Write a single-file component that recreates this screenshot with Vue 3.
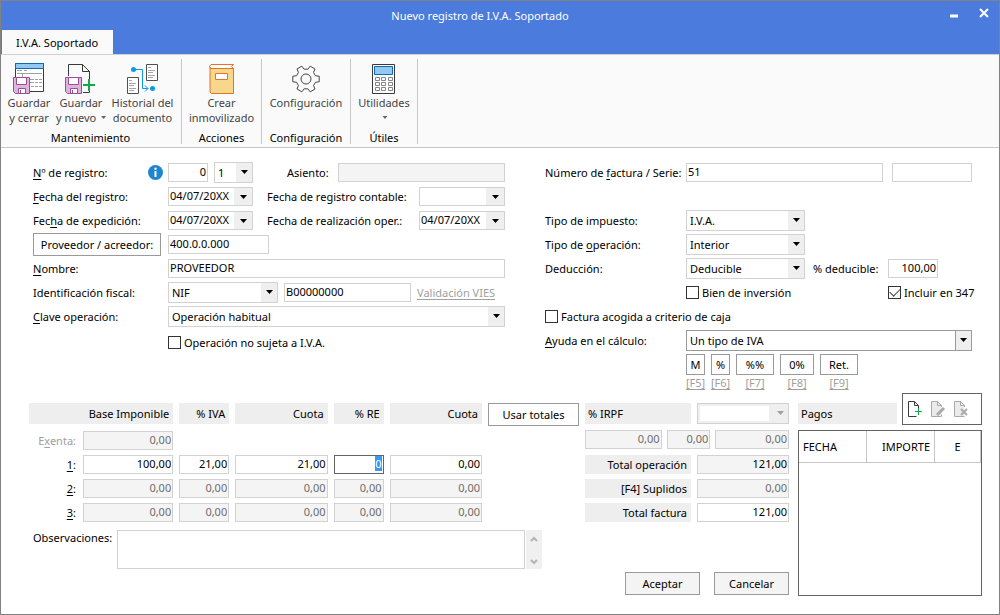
<script setup>
import { onMounted, ref } from 'vue'

const equivalenceInput = ref(null)

const bases = [
  { key: 'Exenta', off: true, cells: ['0,00'] },
  { key: '1', off: false, cells: ['100,00', '21,00', '21,00', '0', '0,00'] },
  { key: '2', off: true, cells: ['0,00', '0,00', '0,00', '0,00', '0,00'] },
  { key: '3', off: true, cells: ['0,00', '0,00', '0,00', '0,00', '0,00'] }
]
const columnNames = ['Base imponible', '% IVA', 'Cuota IVA', '% RE', 'Cuota RE']

const rates = [
  { label: 'M', key: '[F5]', size: 'small' },
  { label: '%', key: '[F6]', size: 'small' },
  { label: '%%', key: '[F7]', size: 'large' },
  { label: '0%', key: '[F8]', size: 'medium' },
  { label: 'Ret.', key: '[F9]', size: 'large' }
]

const totals = [
  { id: 'total-op', label: 'Total operación', value: '121,00', kind: 'locked' },
  { id: 'suplidos', label: '[F4] Suplidos', value: '0,00', kind: 'off' },
  { id: 'total-fac', label: 'Total factura', value: '121,00', kind: '' }
]

function gear(cx, cy, outer, inner) {
  const points = []
  for (let i = 0; i < 6; i++) {
    for (const [offset, r] of [[-19, inner], [-12, outer], [12, outer], [19, inner]]) {
      const a = ((i * 60 + offset) * Math.PI) / 180
      points.push(`${(cx + r * Math.cos(a)).toFixed(2)} ${(cy + r * Math.sin(a)).toFixed(2)}`)
    }
  }
  return `M${points.join('L')}Z`
}
const gearPath = gear(16, 17, 13.5, 10)

const setEquivalence = (el, row, col) => {
  if (row === 1 && col === 3) equivalenceInput.value = el
}

onMounted(() => {
  equivalenceInput.value?.focus()
  equivalenceInput.value?.select()
})
</script>

<template>
  <main class="window">
    <header class="titlebar">
      <h1>Nuevo registro de I.V.A. Soportado</h1>
      <div class="window-buttons">
        <button type="button" aria-label="Minimizar">
          <svg width="10" height="12" viewBox="0 0 10 12"><path d="M1 9h8" stroke="#fff" stroke-width="3" /></svg>
        </button>
        <button type="button" aria-label="Cerrar">
          <svg width="10" height="12" viewBox="0 0 10 12"><path d="M1 2l8 8M9 2l-8 8" stroke="#fff" stroke-width="2" /></svg>
        </button>
      </div>
      <button class="tab" type="button">I.V.A. Soportado</button>
    </header>

    <nav class="ribbon">
      <section class="group maintenance">
        <div class="tools">
          <button class="tool" type="button">
            <svg width="32" height="32" viewBox="0 0 32 32" fill="none">
              <path d="M2.5 1.5h28v28h-28z" fill="#fff" stroke="#3a3a3a" />
              <path d="M2.5 1.5h28v5h-28z" fill="#91c9f0" stroke="#0f6ab4" />
              <path d="M4 8.5h5M11 8.5h3M4 11.5h25M9.5 11v5M17 17.5h4M22 17.5h3M26 17.5h3M17 20.5h4M22 20.5h3M26 20.5h3M18 24.5h3M22 24.5h3M26 24.5h3" stroke="#a0a0a0" />
              <path d="M.5 15.5h16v16h-14l-2-2z" fill="#dcb5dd" stroke="#9b4c9b" />
              <path d="M3.5 15.5h10v7h-10zM5.5 26.5h7v5h-7z" fill="#fff" stroke="#9b4c9b" />
              <path d="M7.5 28v3" stroke="#9b4c9b" />
            </svg>
            <span>Guardar<br />y cerrar</span>
          </button>
          <button class="tool" type="button">
            <svg width="32" height="32" viewBox="0 0 32 32" fill="none">
              <path d="M3.5 14V2.5h14l7 7V18M24.5 29v1.5H18" stroke="#3a3a3a" />
              <path d="M17.5 2.5v7h7" stroke="#3a3a3a" />
              <path d="M.5 15.5h16v16h-14l-2-2z" fill="#dcb5dd" stroke="#9b4c9b" />
              <path d="M3.5 15.5h10v7h-10zM5.5 26.5h7v5h-7z" fill="#fff" stroke="#9b4c9b" />
              <path d="M7.5 28v3" stroke="#9b4c9b" />
              <path d="M18 23h12M24 17v12" stroke="#12a84c" stroke-width="2" />
            </svg>
            <span>Guardar<br />y nuevo <i class="caret"></i></span>
          </button>
          <button class="tool wide" type="button">
            <svg width="34" height="32" viewBox="0 0 34 32" fill="none">
              <path d="M20.5 2.5h11v16h-11zM1.5 15.5h11v16h-11z" fill="#fff" stroke="#505050" />
              <path d="M22 5.5h3M22 8.5h7M22 10.5h5M22 13.5h7M22 15.5h5M3 18.5h3M3 21.5h7M3 23.5h5M3 26.5h7M3 28.5h5" stroke="#a5a5a5" />
              <path d="M7 7.5h9.500v19H22M19 23.5l3 3-3 3" stroke="#0a9be8" />
              <circle cx="7.5" cy="7.5" r="2.500" fill="#0a9be8" />
              <circle cx="26.5" cy="26.5" r="2.500" fill="#0a9be8" />
            </svg>
            <span>Historial del<br />documento</span>
          </button>
        </div>
        <h2>Mantenimiento</h2>
      </section>
      <section class="group actions">
        <div class="tools">
          <button class="tool wide" type="button">
            <svg width="32" height="32" viewBox="0 0 32 32" fill="none">
              <path d="M4.5 6.5h23v25h-22l-1.500-1.500V4z" fill="#f7d78c" stroke="#e8712a" />
              <path d="M27.5 2.5H5L3.5 4.5 5 6.5h22.500l-2-2z" fill="#fff" stroke="#e8712a" />
              <path d="M9.5 11.5h12v6h-12z" fill="#fff" stroke="#e8712a" />
            </svg>
            <span>Crear<br />inmovilizado</span>
          </button>
        </div>
        <h2>Acciones</h2>
      </section>
      <section class="group setup">
        <div class="tools">
          <button class="tool wide" type="button">
            <svg width="32" height="32" viewBox="0 0 32 32" fill="none" stroke="#444">
              <path :d="gearPath" stroke-linejoin="round" />
              <circle cx="16" cy="17" r="5" />
            </svg>
            <span>Configuración</span>
          </button>
        </div>
        <h2>Configuración</h2>
      </section>
      <section class="group extras">
        <div class="tools">
          <button class="tool" type="button">
            <svg width="32" height="32" viewBox="0 0 32 32" fill="none">
              <path d="M4.5 2.5h22v29h-22z" fill="#fff" stroke="#3a3a3a" />
              <path d="M6.5 4.5h18v8h-18z" fill="#91c9f0" stroke="#0f6ab4" />
              <path d="M7.5 15.5h4v3h-4zM13.5 15.5h4v3h-4zM20.5 15.5h4v3h-4zM7.5 20.5h4v3h-4zM13.5 20.5h4v3h-4zM20.5 20.5h4v3h-4zM7.5 25.5h4v3h-4zM13.5 25.5h4v3h-4zM20.5 25.5h4v3h-4z" stroke="#858585" />
            </svg>
            <span>Utilidades<br /><i class="caret"></i></span>
          </button>
        </div>
        <h2>Útiles</h2>
      </section>
    </nav>

    <form class="body" @submit.prevent>
      <div class="fields">
        <div class="panel">
          <div class="row">
            <label class="name" for="reg"><u>N</u>º de registro:</label>
            <svg class="info" width="15" height="15" viewBox="0 0 15 15">
              <circle cx="7.5" cy="7.5" r="7.500" fill="#1e86cf" />
              <path d="M7.5 6v6" stroke="#fff" stroke-width="2" fill="none" />
              <circle cx="7.5" cy="3.800" r="1.200" fill="#fff" />
            </svg>
            <div class="slot">
              <input id="reg" class="number w40" value="0" />
              <div class="combo w39"><select aria-label="Serie de registro"><option>1</option></select></div>
              <label class="asiento" for="asiento">Asiento:</label>
              <input id="asiento" class="grow" disabled />
            </div>
          </div>
          <div class="row">
            <label class="name" for="f-reg"><u>F</u>echa del registro:</label>
            <div class="slot">
              <div class="combo date"><input id="f-reg" value="04/07/20XX" /></div>
              <label class="second" for="f-cont">Fecha de registro contable:</label>
              <div class="combo date to-edge"><input id="f-cont" /></div>
            </div>
          </div>
          <div class="row">
            <label class="name" for="f-exp">Fec<u>h</u>a de expedición:</label>
            <div class="slot">
              <div class="combo date"><input id="f-exp" value="04/07/20XX" /></div>
              <label class="second" for="f-oper">Fecha de realización oper.:</label>
              <div class="combo date to-edge"><input id="f-oper" value="04/07/20XX" /></div>
            </div>
          </div>
          <div class="row">
            <div class="name"><button class="btn provider" type="button">Proveedor / acreedor:</button></div>
            <div class="slot"><input class="w101" aria-label="Cuenta de proveedor" value="400.0.0.000" /></div>
          </div>
          <div class="row">
            <label class="name" for="nombre"><u>N</u>ombre:</label>
            <div class="slot"><input id="nombre" class="grow" value="PROVEEDOR" /></div>
          </div>
          <div class="row">
            <label class="name" for="fiscal">Identificación fiscal:</label>
            <div class="slot">
              <div class="combo w110"><select id="fiscal"><option>NIF</option></select></div>
              <input class="w127" aria-label="Número fiscal" value="B00000000" />
              <a class="link vies" href="#">Validación VIES</a>
            </div>
          </div>
          <div class="row">
            <label class="name" for="clave"><u>C</u>lave operación:</label>
            <div class="slot">
              <div class="combo grow"><select id="clave"><option>Operación habitual</option></select></div>
            </div>
          </div>
          <div class="row last">
            <span class="name"></span>
            <label class="check"><input type="checkbox" />Operación no sujeta a I.V.A.</label>
          </div>
        </div>

        <div class="panel right">
          <div class="row">
            <label class="name" for="factura">Número de <u>f</u>actura / Serie:</label>
            <div class="slot">
              <input id="factura" class="grow" value="51" />
              <input class="serie" aria-label="Serie" />
            </div>
          </div>
          <div class="row"></div>
          <div class="row">
            <label class="name" for="impuesto">Tipo de impuesto:</label>
            <div class="slot"><div class="combo w119"><select id="impuesto"><option>I.V.A.</option></select></div></div>
          </div>
          <div class="row">
            <label class="name" for="tipo-op">Tipo de <u>o</u>peración:</label>
            <div class="slot"><div class="combo w119"><select id="tipo-op"><option>Interior</option></select></div></div>
          </div>
          <div class="row">
            <label class="name" for="deduccion">Deducción:</label>
            <div class="slot">
              <div class="combo w119"><select id="deduccion"><option>Deducible</option></select></div>
              <label class="percent" for="deducible">% deducible:</label>
              <input id="deducible" class="number w50" value="100,00" />
            </div>
          </div>
          <div class="row">
            <span class="name"></span>
            <div class="slot">
              <label class="check inversion"><input type="checkbox" />Bien de inversión</label>
              <label class="check"><input type="checkbox" checked />Incluir en 347</label>
            </div>
          </div>
          <div class="row">
            <label class="check"><input type="checkbox" />Factura acogida a criterio de caja</label>
          </div>
          <div class="row">
            <label class="name" for="ayuda"><u>A</u>yuda en el cálculo:</label>
            <div class="slot"><div class="combo strong grow"><select id="ayuda"><option>Un tipo de IVA</option></select></div></div>
          </div>
          <div class="row rates">
            <span class="name"></span>
            <div class="slot">
              <div v-for="rate in rates" :key="rate.key" class="rate" :class="rate.size">
                <button class="btn" type="button">{{ rate.label }}</button>
                <a class="link" href="#">{{ rate.key }}</a>
              </div>
            </div>
          </div>
        </div>
      </div>

      <div class="lower">
        <div class="breakdown">
          <div class="bases">
            <table>
              <colgroup>
                <col class="c-key" /><col class="c-wide" /><col class="c-rate" /><col class="c-wide" /><col class="c-rate" /><col class="c-wide" />
              </colgroup>
              <thead>
                <tr>
                  <th colspan="2"><span class="cap">Base Imponible</span></th>
                  <th><span class="cap">% IVA</span></th>
                  <th><span class="cap">Cuota</span></th>
                  <th><span class="cap">% RE</span></th>
                  <th><span class="cap">Cuota</span></th>
                </tr>
              </thead>
              <tbody>
                <tr v-for="(row, r) in bases" :key="row.key">
                  <th v-if="r === 0" class="key faded">E<u>x</u>enta:</th>
                  <th v-else class="key"><u>{{ row.key }}</u>:</th>
                  <td v-for="(cell, c) in row.cells" :key="c">
                    <input
                      :ref="(el) => setEquivalence(el, r, c)"
                      class="number"
                      :value="cell"
                      :disabled="row.off"
                      :aria-label="`${columnNames[c]} ${row.key}`"
                    />
                  </td>
                </tr>
              </tbody>
            </table>
            <button class="btn use-totals" type="button">Usar totales</button>
          </div>
          <div class="notes">
            <label for="notas">Observaciones:</label>
            <textarea id="notas"></textarea>
            <div class="scroller">
              <svg width="8" height="6" viewBox="0 0 8 6"><path d="M1 5l3-3 3 3" fill="none" stroke="#b4b4b4" stroke-width="2" /></svg>
              <svg width="8" height="6" viewBox="0 0 8 6"><path d="M1 1l3 3 3-3" fill="none" stroke="#b4b4b4" stroke-width="2" /></svg>
            </div>
          </div>
        </div>

        <div class="summary">
          <div class="pair">
            <span class="cap start">% IRPF</span>
            <div class="combo off"><select aria-label="Tipo de IRPF" disabled><option></option></select></div>
          </div>
          <div class="triple">
            <input class="number" aria-label="Base IRPF" value="0,00" disabled />
            <input class="number" aria-label="Porcentaje IRPF" value="0,00" disabled />
            <input class="number" aria-label="Cuota IRPF" value="0,00" disabled />
          </div>
          <div v-for="t in totals" :key="t.id" class="pair">
            <label class="cap low" :for="t.id">{{ t.label }}</label>
            <input :id="t.id" class="number" :class="t.kind" :value="t.value" :disabled="t.kind === 'off'" :readonly="t.kind === 'locked'" />
          </div>
          <div class="confirm">
            <button class="btn solid" type="submit">Aceptar</button>
            <button class="btn solid" type="button">Cancelar</button>
          </div>
        </div>

        <div class="payments">
          <div class="payments-head">
            <h2 class="cap start">Pagos</h2>
            <div class="toolbox">
              <button type="button" aria-label="Añadir pago">
                <svg width="16" height="18" viewBox="0 0 16 18" fill="none">
                  <path d="M11.5 8V5.5l-4-4h-6v15h8M7.5 1.5v4h4" stroke="#3a3a3a" />
                  <path d="M8 11.500h7M11.5 8v7" stroke="#12a84c" />
                </svg>
              </button>
              <button type="button" aria-label="Editar pago" disabled>
                <svg width="16" height="18" viewBox="0 0 16 18" fill="none">
                  <path d="M11.5 7V5.5l-4-4h-6v15h10v-2" fill="#ebebeb" stroke="#aaa" />
                  <path d="M7.5 1.5v4h4" stroke="#aaa" />
                  <path d="M7 15l7-7" stroke="#aaa" stroke-width="3" />
                </svg>
              </button>
              <button type="button" aria-label="Eliminar pago" disabled>
                <svg width="16" height="18" viewBox="0 0 16 18" fill="none">
                  <path d="M11.5 7V5.5l-4-4h-6v15h10" fill="#ebebeb" stroke="#aaa" />
                  <path d="M7.5 1.5v4h4" stroke="#aaa" />
                  <path d="M8 9l6 6M14 9l-6 6" stroke="#aaa" stroke-width="2" />
                </svg>
              </button>
            </div>
          </div>
          <div class="list">
            <table>
              <thead>
                <tr><th class="date-col">FECHA</th><th class="amount-col">IMPORTE</th><th class="state-col">E</th></tr>
              </thead>
            </table>
          </div>
        </div>
      </div>
    </form>
  </main>
</template>

<style>
body {
  margin: 0;
}
</style>

<style scoped>
* {
  box-sizing: border-box;
}
.window {
  display: flex;
  flex-direction: column;
  min-height: 100vh;
  border: 1px solid #828282;
  background: #fff;
  color: #000;
  font: 11px/15px "Noto Sans", "Open Sans", sans-serif;
}
button,
input,
select,
textarea {
  font: inherit;
  color: inherit;
  margin: 0;
}
button {
  padding: 0;
  border: 0;
  background: none;
}
h1,
h2 {
  margin: 0;
  font: inherit;
}
u {
  text-underline-offset: 2px;
}

.titlebar {
  display: grid;
  grid-template-columns: 1fr auto 1fr;
  grid-template-rows: 29px 24px;
  background: #4b7bdc;
  color: #fff;
}
.titlebar h1 {
  grid-column: 2;
  align-self: center;
  padding-right: 40px;
}
.window-buttons {
  display: flex;
  justify-content: flex-end;
  align-items: flex-start;
  gap: 20px;
  padding: 6px 10px 0 0;
}
.window-buttons svg {
  display: block;
}
.tab {
  grid-column: 1;
  grid-row: 2;
  justify-self: start;
  margin-left: 1px;
  padding: 0 15px 0 14px;
  background: #fafafa;
  color: #000;
}
.ribbon {
  display: flex;
  padding: 4px 0 3px;
  border-top: 1px solid #d0d0d0;
  border-bottom: 1px solid #c6c6c6;
  background: #fafafa;
}
.group {
  display: flex;
  flex-direction: column;
  border-right: 1px solid #c6c6c6;
}
.group h2 {
  line-height: 12px;
  text-align: center;
}
.maintenance {
  padding: 0 3px 0 2px;
}
.actions {
  width: 80px;
}
.setup {
  width: 89px;
}
.extras {
  width: 67px;
}
.tools {
  display: flex;
  justify-content: center;
  height: 73px;
}
.tool {
  display: flex;
  flex-direction: column;
  align-items: center;
  gap: 1px;
  width: 52px;
  padding-top: 3px;
  color: #444;
  white-space: nowrap;
}
.tool.wide {
  width: 71px;
}
.tool svg {
  flex: none;
}
.caret {
  display: inline-block;
  width: 5px;
  height: 3px;
  margin: 0 0 3px 2px;
  background: #666;
  clip-path: polygon(0 0, 100% 0, 50% 100%);
}

.body {
  display: flex;
  flex: 1;
  flex-direction: column;
  padding: 13px 17px 18px 22px;
}
.fields {
  display: grid;
  grid-template-columns: minmax(0, 472fr) minmax(0, 427fr);
  gap: 40px;
  padding: 0 10px;
}
.panel {
  display: flex;
  flex-direction: column;
  gap: 1px;
}
.row {
  display: flex;
  align-items: center;
  position: relative;
  height: 23px;
}
.row.last {
  height: 27px;
}
.name {
  flex: none;
  width: 135px;
}
.right .name {
  width: 141px;
}
.slot {
  display: flex;
  flex: 1;
  align-items: center;
  gap: 6px;
  min-width: 0;
}
.info {
  position: absolute;
  left: 115px;
}
input:not([type="checkbox"]),
textarea {
  min-width: 0;
  height: 19px;
  padding: 0 2px 2px 1px;
  border: 1px solid #d2d2d2;
  border-radius: 0;
  outline: 0;
  background: #fff;
}
input.number {
  padding-right: 1px;
  text-align: right;
}
input:disabled:not([type="checkbox"]) {
  background: #f4f4f4;
  color: #6d6d6d;
}
input.locked:not([type="checkbox"]) {
  background: #f4f4f4;
}
td input:focus:not([type="checkbox"]) {
  border-color: #646464;
}
input::selection {
  background: #3399ff;
  color: #fff;
}
.combo {
  position: relative;
  display: flex;
  flex: none;
  height: 21px;
}
.combo select {
  width: 100%;
  height: 100%;
  padding: 0 16px 0 3px;
  border: 1px solid #d2d2d2;
  border-radius: 0;
  outline: 0;
  appearance: none;
  background: linear-gradient(#efefef, #efefef) right / 16px 100% no-repeat #fff;
}
.combo::after {
  content: "";
  position: absolute;
  top: 8px;
  right: 5px;
  width: 7px;
  height: 4px;
  background: #000;
  clip-path: polygon(0 0, 100% 0, 50% 100%);
  pointer-events: none;
}
.combo.date {
  width: 85px;
  height: 19px;
}
.combo.date.to-edge {
  width: 86px;
}
.combo.date::after {
  right: 6px;
}
.combo.date input:not([type="checkbox"]) {
  width: 100%;
  background: linear-gradient(#efefef, #efefef) right / 18px 100% no-repeat #fff;
}
.combo.strong select {
  border-color: #9a9a9a;
  background: linear-gradient(#9a9a9a, #9a9a9a) right 15px top / 1px 100% no-repeat,
    linear-gradient(#efefef, #efefef) right / 15px 100% no-repeat #fff;
}
.combo.off select {
  opacity: 1;
  background: linear-gradient(#fff, #fff) 2px 2px / calc(100% - 21px) 15px no-repeat #efefef;
}
.combo.off::after {
  background: #a0a0a0;
}
.combo.grow,
input.grow {
  flex: 1;
}
.w39 {
  width: 39px;
}
.w40 {
  width: 40px;
}
.w50 {
  width: 50px;
}
.w101 {
  width: 101px;
}
.w110 {
  width: 110px;
}
.w119 {
  width: 119px;
}
.w127 {
  width: 127px;
}
.serie {
  width: 80px;
  margin-left: 3px;
}
.asiento {
  width: 45px;
  margin-left: 28px;
}
.second {
  flex: 1;
  margin-left: 8px;
  white-space: nowrap;
}
.percent {
  width: 69px;
  margin-left: 2px;
  white-space: nowrap;
}
.inversion {
  width: 196px;
}
.btn {
  height: 23px;
  border: 1px solid #9a9a9a;
  background: #fff;
}
.provider {
  display: block;
  width: 128px;
}
.link {
  color: #a0a0a0;
  text-decoration: underline;
  text-underline-offset: 2px;
}
.link.vies {
  white-space: nowrap;
}
.check {
  display: flex;
  flex: none;
  align-items: center;
  gap: 3px;
  white-space: nowrap;
}
.check input {
  display: grid;
  place-items: center;
  width: 13px;
  height: 13px;
  border: 1px solid #333;
  appearance: none;
  background: #fff;
}
.check input:checked::before {
  content: "";
  width: 9px;
  height: 5px;
  margin-top: -3px;
  border: solid #444;
  border-width: 0 0 1px 1px;
  transform: rotate(-45deg);
}
.row.rates {
  align-items: flex-start;
  height: auto;
  padding-top: 1px;
}
.rate {
  display: flex;
  flex-direction: column;
  align-items: center;
}
.rate .btn {
  width: 100%;
  height: 21px;
}
.small {
  width: 19px;
}
.medium {
  width: 34px;
}
.large {
  width: 38px;
}

.lower {
  display: grid;
  flex: 1;
  grid-template-columns: 562fr 204fr 193fr;
  align-items: stretch;
  margin-top: 3px;
}
.breakdown {
  padding: 5px 6px 0 0;
}
.bases {
  display: flex;
  align-items: flex-start;
}
.bases table {
  flex: 1;
  min-width: 0;
  table-layout: fixed;
  border-spacing: 6px 5px;
}
.c-key {
  width: 48px;
}
.c-rate {
  width: 50px;
}
.bases th,
.bases td {
  padding: 0;
  font-weight: normal;
}
.bases thead th {
  padding-bottom: 2px;
}
.bases td input {
  display: block;
  width: 100%;
}
.bases .key {
  padding-right: 1px;
  text-align: right;
}
.bases .faded {
  color: #a0a0a0;
}
.cap {
  display: block;
  height: 21px;
  padding-right: 4px;
  background: #eee;
  line-height: 21px;
  text-align: right;
  white-space: nowrap;
}
.cap.start {
  padding-left: 3px;
  text-align: left;
}
.cap.low {
  height: 19px;
  line-height: 19px;
}
.use-totals {
  flex: none;
  width: 91px;
  margin-top: 5px;
}
.notes {
  display: flex;
  margin-top: 3px;
  padding: 0 37px 0 10px;
}
.notes label {
  width: 84px;
}
.notes textarea {
  flex: 1;
  height: 39px;
  resize: none;
}
.scroller {
  display: flex;
  flex-direction: column;
  align-items: center;
  justify-content: space-between;
  width: 16px;
  margin-left: 1px;
  padding: 6px 0 4px;
  background: #f0f0f0;
}
.summary {
  display: flex;
  flex-direction: column;
  gap: 5px;
  padding: 10px 0 1px;
}
.pair {
  display: grid;
  grid-template-columns: 106fr 92fr;
  gap: 6px;
}
.pair input {
  width: 100%;
}
.triple {
  display: grid;
  grid-template-columns: 77fr 44fr 74fr;
  gap: 5px;
  margin: 1px 0;
}
.confirm {
  display: flex;
  justify-content: flex-end;
  gap: 14px;
  margin-top: auto;
}
.btn.solid {
  width: 75px;
  background: #f4f4f4;
}
.payments {
  display: flex;
  flex-direction: column;
  gap: 5px;
  padding-left: 9px;
}
.payments-head {
  display: flex;
  align-items: flex-end;
  gap: 5px;
}
.payments-head h2 {
  flex: 1;
  margin-bottom: 1px;
}
.toolbox {
  display: flex;
  align-items: center;
  gap: 7px;
  width: 80px;
  height: 32px;
  padding: 0 0 0 4px;
  border: 1px solid #646464;
}
.toolbox svg {
  display: block;
}
.list {
  flex: 1;
  border: 1px solid #646464;
}
.list table {
  width: 100%;
  table-layout: fixed;
  border-collapse: separate;
  border-spacing: 0;
}
.list th {
  height: 32px;
  padding: 0 4px;
  border-right: 1px solid #c6c6c6;
  border-bottom: 1px solid #c6c6c6;
  font-weight: normal;
}
.list .date-col {
  width: 68px;
  text-align: left;
}
.list .amount-col {
  width: 68px;
  text-align: right;
}
</style>
